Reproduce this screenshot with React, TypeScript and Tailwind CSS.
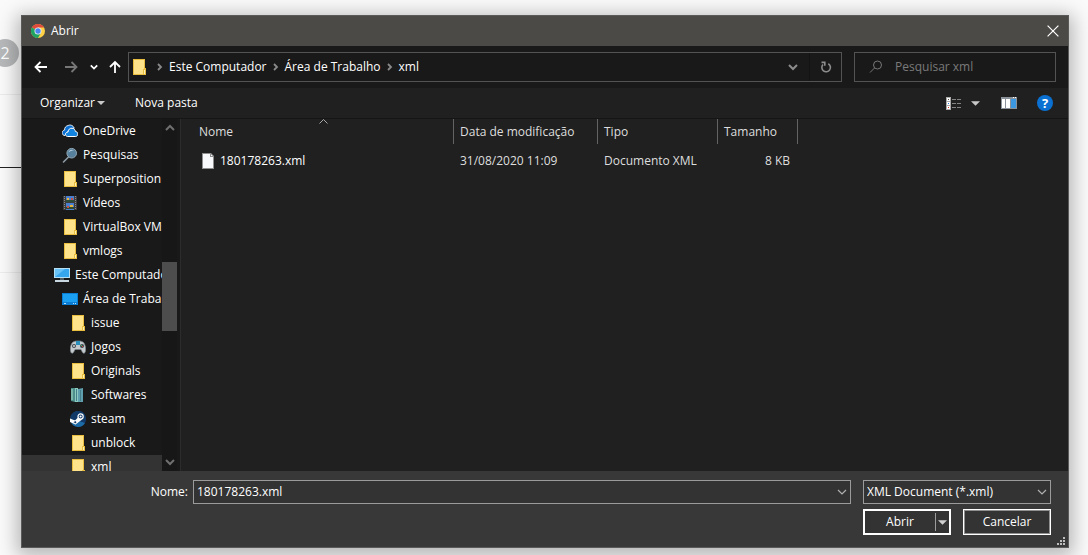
import type { ReactNode } from 'react';

function FolderIcon() {
  return (
    <svg viewBox="0 0 16 16" className="size-4 shrink-0" aria-hidden="true">
      <path d="M2 0h12v11h1v5H2z" fill="#e9bd3f" />
      <path d="M3 1h10v10h-1v4H3z" fill="#ffe38b" />
      <path d="M13 12h1v3h-1z" fill="#fff0b5" />
    </svg>
  );
}

function OneDriveIcon() {
  return (
    <svg viewBox="0 0 16 16" className="size-4 shrink-0" aria-hidden="true">
      <path d="M3 12.500C1 12.500 0 11 .2 9.500.4 8 1.500 7.200 2.600 7 2.400 4.500 4.200 2.800 6 2.600 8 1.500 11 2 12.200 5.200L8 6z" fill="#0a6fd0" stroke="#fff" strokeWidth=".9" />
      <path d="M5.500 13.500C2.500 13 3 9 6 9c.3-2.500 1.800-4 4-3.800 2 .1 3.200 1.600 3.400 3.300 3.200.2 3.200 4.700.3 5z" fill="#1284e0" stroke="#fff" strokeWidth="1" />
    </svg>
  );
}

function SearchesIcon() {
  return (
    <svg viewBox="0 0 16 16" className="size-4 shrink-0" aria-hidden="true">
      <path d="M1.500 15L7 9.500" stroke="#8d9aa5" strokeWidth="1.600" strokeLinecap="round" />
      <circle cx="9.700" cy="6.200" r="4.800" fill="#56809c" stroke="#93a7b4" />
      <path d="M6.500 5.500C7 3 10 2 12 3.500 10 3.500 8 4 6.500 5.500z" fill="#b6cedc" />
    </svg>
  );
}

function VideosIcon() {
  return (
    <svg viewBox="0 0 16 16" className="size-4 shrink-0" aria-hidden="true">
      <path d="M1 1h14v14H1z" fill="#3c3c3c" />
      <path d="M2.500 1v14M13.500 1v14" stroke="#8c8c8c" strokeDasharray="1 1" />
      <path d="M4 1h8v6H4zM4 8h8v7H4z" fill="#4a7fd0" />
      <path d="M4 5h8v2H4zM4 12h8v2H4z" fill="#2d4b35" />
      <path d="M5 3h2v2H5zM8 10h3v2H8z" fill="#e8b53c" />
      <path d="M9 3h2v2H9zM5 11h2v2H5z" fill="#c95040" />
    </svg>
  );
}

function ComputerIcon() {
  return (
    <svg viewBox="0 0 16 16" className="size-4 shrink-0" aria-hidden="true">
      <path d="M0 1h16v10H0z" fill="#b5dff5" />
      <path d="M1 2h14v8H1z" fill="#36a6ee" />
      <path d="M1 10L11 2H1z" fill="#68c2f6" />
      <path d="M6 11.500h4v1H6z" fill="#8fa4b0" />
      <path d="M1 13h14v2H1z" fill="#c8d6df" />
    </svg>
  );
}

function DesktopIcon() {
  return (
    <svg viewBox="0 0 16 16" className="size-4 shrink-0" aria-hidden="true">
      <path d="M0 2h16v12H0z" fill="#0b7ed3" />
      <path d="M1 3h14v8H1z" fill="#1b9ff3" />
      <path d="M2 12h2v1H2zM11 12h1v1h-1zM13 12h1v1h-1z" fill="#b7e4ff" />
    </svg>
  );
}

function GamesIcon() {
  return (
    <svg viewBox="0 0 16 16" className="size-4 shrink-0" aria-hidden="true">
      <path d="M3 3c2-1.500 8-1.500 10 0 2.500 2 3.500 8 2 10.500-1.500 2-3-.5-4-3H5c-1 2.500-2.500 5-4 3C-.5 11 .5 5 3 3z" fill="#c3c9cc" stroke="#7a8488" strokeWidth=".7" />
      <path d="M6 2h4v4H6z" fill="#2a8fba" />
      <circle cx="4" cy="7" r="2" fill="#3e474c" />
      <circle cx="12" cy="7" r="2" fill="#3e474c" />
      <path d="M3 7h2M4 6v2" stroke="#e5e9eb" strokeWidth=".8" />
      <path d="M11 6h1v1h-1z" fill="#52c064" />
      <path d="M12 7h1v1h-1z" fill="#e64a3c" />
    </svg>
  );
}

function SoftwaresIcon() {
  return (
    <svg viewBox="0 0 16 16" className="size-4 shrink-0" aria-hidden="true">
      <path d="M1 1l4 0v14l-4-1z" fill="#4e8f8c" />
      <path d="M5 1h3v14H5z" fill="#8ccbc0" />
      <path d="M8 2l5-1v14H8z" fill="#5f9fae" />
      <path d="M6.500 2v12M10.500 3v11" stroke="#467f8b" />
      <path d="M2 2v11" stroke="#a7dcc8" />
    </svg>
  );
}

function SteamIcon() {
  return (
    <svg viewBox="0 0 16 16" className="size-4 shrink-0" aria-hidden="true">
      <path d="M.3 6A8 8 0 1 1 .8 11z" fill="#123a68" />
      <path d="M1 11.500A8 8 0 0 0 15 12L9 10z" fill="#1c6ba6" />
      <path d="M0 7.500l5 2 4-4 3 3-4.500 3.500-2 1.500L0 11z" fill="#fff" />
      <circle cx="10.600" cy="5.500" r="2.600" fill="#123a68" stroke="#fff" strokeWidth="1.200" />
      <circle cx="10.600" cy="5.500" r="1.100" fill="#fff" />
      <circle cx="5.200" cy="11.200" r="1.500" fill="#123a68" stroke="#fff" strokeWidth=".9" />
    </svg>
  );
}

function ChromeIcon() {
  return (
    <svg viewBox="0 0 16 16" className="size-[14px] shrink-0" aria-hidden="true">
      <circle cx="8" cy="8" r="8" fill="#fdd045" />
      <path d="M8 8L1.070 4A8 8 0 0 1 14.930 4H8z" fill="#df4a3c" />
      <path d="M1.070 4A8 8 0 0 0 8 16l3.460-6L8 8z" fill="#1fa463" />
      <circle cx="8" cy="8" r="4" fill="#f4f4f4" />
      <circle cx="8" cy="8" r="3.100" fill="#4a86ee" />
    </svg>
  );
}

function Chevron({ className, path, width = 1 }: { className: string; path: string; width?: number }) {
  return (
    <svg viewBox="0 0 10 10" className={className} fill="none" stroke="currentColor" strokeWidth={width} aria-hidden="true">
      <path d={path} />
    </svg>
  );
}

const DOWN = 'M1 3l4 4 4-4';
const UP = 'M1 7l4-4 4 4';
const RIGHT = 'M3 2l3 3-3 3';

function Triangle({ className }: { className: string }) {
  return (
    <svg viewBox="0 0 8 4" className={className} fill="currentColor" aria-hidden="true">
      <path d="M0 0h8L4 4z" />
    </svg>
  );
}

type Item = { name: string; icon: ReactNode; indent: string; selected?: boolean };

const items: Item[] = [
  { name: 'OneDrive', icon: <OneDriveIcon />, indent: 'pl-10' },
  { name: 'Pesquisas', icon: <SearchesIcon />, indent: 'pl-10' },
  { name: 'Superposition', icon: <FolderIcon />, indent: 'pl-10' },
  { name: 'Vídeos', icon: <VideosIcon />, indent: 'pl-10' },
  { name: 'VirtualBox VMs', icon: <FolderIcon />, indent: 'pl-10' },
  { name: 'vmlogs', icon: <FolderIcon />, indent: 'pl-10' },
  { name: 'Este Computador', icon: <ComputerIcon />, indent: 'pl-8' },
  { name: 'Área de Trabalho', icon: <DesktopIcon />, indent: 'pl-10' },
  { name: 'issue', icon: <FolderIcon />, indent: 'pl-12' },
  { name: 'Jogos', icon: <GamesIcon />, indent: 'pl-12' },
  { name: 'Originals', icon: <FolderIcon />, indent: 'pl-12' },
  { name: 'Softwares', icon: <SoftwaresIcon />, indent: 'pl-12' },
  { name: 'steam', icon: <SteamIcon />, indent: 'pl-12' },
  { name: 'unblock', icon: <FolderIcon />, indent: 'pl-12' },
  { name: 'xml', icon: <FolderIcon />, indent: 'pl-12', selected: true },
];

function TitleBar() {
  return (
    <header className="flex h-[30px] shrink-0 items-center bg-[#4b4a47] pr-[9px] pl-[9px]">
      <ChromeIcon />
      <h1 className="ml-[6px] flex-1">Abrir</h1>
      <button type="button" aria-label="Fechar">
        <Chevron className="size-3" path="M.5.5l9 9M9.500.5l-9 9" />
      </button>
    </header>
  );
}

function Navigation() {
  const crumbs = ['Este Computador', 'Área de Trabalho', 'xml'];
  return (
    <nav className="flex h-[42px] shrink-0 items-center bg-[#191919] px-3">
      <button type="button" aria-label="Voltar">
        <svg viewBox="0 0 14 12" className="h-3 w-[14px]" fill="none" stroke="#fff" strokeWidth="1.800" aria-hidden="true">
          <path d="M13 6H2M6.500 1L1.500 6l5 5" />
        </svg>
      </button>
      <button type="button" aria-label="Avançar" className="ml-4">
        <svg viewBox="0 0 14 12" className="h-3 w-[14px]" fill="none" stroke="#777" strokeWidth="1.800" aria-hidden="true">
          <path d="M1 6h11M7.500 1l5 5-5 5" />
        </svg>
      </button>
      <button type="button" aria-label="Locais recentes" className="ml-3">
        <Chevron className="size-2" path={DOWN} width={2.2} />
      </button>
      <button type="button" aria-label="Subir um nível" className="ml-[11px]">
        <svg viewBox="0 0 12 14" className="h-[14px] w-3" fill="none" stroke="#fff" strokeWidth="1.800" aria-hidden="true">
          <path d="M6 13V2M1 7l5-5 5 5" />
        </svg>
      </button>
      <div className="ml-[7px] flex h-[30px] min-w-0 flex-1 items-center border border-[#535353]">
        <svg viewBox="0 0 14 16" className="ml-1 h-4 w-[14px]" aria-hidden="true">
          <path d="M0 0h12v9h1v7H0z" fill="#e9bd3f" />
          <path d="M1 1h10v9h-1v5H1z" fill="#ffe38b" />
          <path d="M11 11h1v4h-1z" fill="#fff0b5" />
        </svg>
        <ol className="ml-1 flex min-w-0 flex-1 items-center">
          {crumbs.map((crumb) => (
            <li key={crumb} className="flex items-center">
              <Chevron className="mx-1 size-[10px] text-[#8a8a8a]" path={RIGHT} width={1.8} />
              <button type="button" className="whitespace-nowrap">{crumb}</button>
            </li>
          ))}
        </ol>
        <button type="button" aria-label="Locais anteriores" className="mr-[11px] text-[#8c8c8c]">
          <Chevron className="size-[10px]" path={DOWN} width={2} />
        </button>
        <button type="button" aria-label="Atualizar" className="flex h-full w-8 items-center justify-center border-l border-[#131313]">
          <svg viewBox="0 0 12 12" className="size-3" fill="none" stroke="#8c8c8c" strokeWidth="1.600" aria-hidden="true">
            <path d="M8.300 2.700A4.300 4.300 0 1 1 3 3.500M1.500 1.400h3.300v3.300" />
          </svg>
        </button>
      </div>
      <label className="ml-3 flex h-[30px] w-[202px] items-center border border-[#535353] pl-[14px]">
        <svg viewBox="0 0 14 14" className="size-[14px] shrink-0" fill="none" stroke="#777" aria-hidden="true">
          <circle cx="8.500" cy="5" r="4" />
          <path d="M5.500 8L1 12.500" />
        </svg>
        <input type="search" aria-label="Pesquisar xml" placeholder="Pesquisar xml" className="ml-3 min-w-0 flex-1 bg-transparent outline-none placeholder:text-[#7a7a7a]" />
      </label>
    </nav>
  );
}

function Toolbar() {
  return (
    <div className="flex h-[31px] shrink-0 items-center border-b border-[#151515] bg-[#202020] pr-[15px] pl-[18px]">
      <button type="button" className="flex items-center">
        Organizar
        <Triangle className="ml-[2px] h-1 w-2 text-[#c8c8c8]" />
      </button>
      <button type="button" className="ml-[30px]">Nova pasta</button>
      <button type="button" aria-label="Alterar modo de exibição" className="ml-auto flex items-center">
        <svg viewBox="0 0 17 13" className="h-[13px] w-[17px]" aria-hidden="true">
          <path d="M0 0h5v13H0z" fill="#aaa" />
          <path d="M1 1h3v3H1zM1 5h3v3H1zM1 9h3v3H1z" fill="#fff" />
          <path d="M2 2h1v1H2z" fill="#555" />
          <path d="M2 6h1v1H2z" fill="#2878e0" />
          <path d="M2 10h1v1H2z" fill="#e02828" />
          <path d="M6 2.500h10M6 6.500h10M6 10.500h10" stroke="#858585" strokeDasharray="4 1" />
        </svg>
        <Triangle className="ml-2 h-[5px] w-[9px] text-[#c8c8c8]" />
      </button>
      <button type="button" aria-label="Mostrar o painel de visualização" className="ml-[21px]">
        <svg viewBox="0 0 16 12" className="h-3 w-4" aria-hidden="true">
          <path d="M0 0h16v12H0z" fill="#8b9299" />
          <path d="M1 2h3v9H1zM5 2h4v9H5z" fill="#fff" />
          <path d="M10 2h5v9h-5z" fill="#3c98e0" />
          <path d="M12 0h1v1h-1zM14 0h1v1h-1z" fill="#fff" />
        </svg>
      </button>
      <button type="button" aria-label="Ajuda" className="ml-5">
        <span className="flex size-4 items-center justify-center rounded-full bg-[#0a70d2] text-[13px] leading-4 font-bold">?</span>
      </button>
    </div>
  );
}

function Sidebar() {
  return (
    <aside className="flex w-[159px] shrink-0 border-r border-[#2c2c2c] bg-[#191919]">
      <ul className="min-w-0 flex-1 overflow-hidden">
        {items.map((item) => (
          <li key={item.name}>
            <a href="#" className={`flex h-6 items-center gap-[5px] whitespace-nowrap ${item.indent} ${item.selected ? 'bg-[#333333]' : ''}`}>
              {item.icon}
              {item.name}
            </a>
          </li>
        ))}
      </ul>
      <div className="mr-[3px] flex w-[15px] shrink-0 flex-col items-center bg-[#171717] py-1 text-[#6f6f6f]">
        <Chevron className="size-[10px]" path={UP} width={2} />
        <div className="flex w-full flex-1 flex-col">
          <div className="flex-[129]" />
          <div className="flex-[69] bg-[#4d4d4d]" />
          <div className="flex-[126]" />
        </div>
        <Chevron className="size-[10px]" path={DOWN} width={2} />
      </div>
    </aside>
  );
}

function FileList() {
  return (
    <section className="min-w-0 flex-1 bg-[#202020]">
      <table className="w-[617px] table-fixed border-separate border-spacing-0 text-left text-[#dedede]">
        <colgroup>
          <col className="w-[273px]" />
          <col className="w-36" />
          <col className="w-[120px]" />
          <col className="w-20" />
        </colgroup>
        <thead>
          <tr className="h-[25px]">
            <th className="relative border-r border-[#636363] p-0 pl-[18px] font-normal">
              Nome
              <svg viewBox="0 0 9 5" className="absolute top-0 left-[138px] h-[5px] w-[9px]" fill="none" stroke="#a8a8a8" aria-hidden="true">
                <path d="M.5 4.500l4-4 4 4" />
              </svg>
            </th>
            <th className="border-r border-[#636363] p-0 pl-[6px] font-normal">Data de modificação</th>
            <th className="border-r border-[#636363] p-0 pl-[6px] font-normal">Tipo</th>
            <th className="border-r border-[#636363] p-0 pl-[6px] font-normal">Tamanho</th>
          </tr>
        </thead>
        <tbody>
          <tr className="h-[34px]">
            <td className="p-0 pl-[21px] text-white">
              <span className="flex items-center gap-[6px]">
                <svg viewBox="0 0 12 16" className="h-4 w-3" aria-hidden="true">
                  <path d="M0 0h9l3 3v13H0z" fill="#8e8e8e" />
                  <path d="M1 1h7v3h3v11H1z" fill="#f8f9fa" />
                  <path d="M9 1.500L10.700 3H9z" fill="#fff" />
                </svg>
                180178263.xml
              </span>
            </td>
            <td className="p-0 pl-[6px]">31/08/2020 11:09</td>
            <td className="p-0 pl-[6px]">Documento XML</td>
            <td className="p-0 pr-2 text-right">8 KB</td>
          </tr>
        </tbody>
      </table>
    </section>
  );
}

function Footer() {
  return (
    <footer className="flex h-[76px] shrink-0 flex-col gap-[5px] bg-[#383838] pt-[9px] pr-[17px]">
      <div className="flex items-start gap-3">
        <div className="flex min-w-0 flex-1 items-center">
          <label htmlFor="filename" className="w-[166px] shrink-0 text-right">Nome:</label>
          <div className="ml-[5px] flex h-6 min-w-0 flex-1 items-center border border-[#9b9b9b] bg-[#333333]">
            <input id="filename" type="text" defaultValue="180178263.xml" className="min-w-0 flex-1 bg-transparent px-[3px] outline-none" />
            <button type="button" aria-label="Mostrar nomes anteriores" className="mr-[3px] text-[#b0b0b0]">
              <Chevron className="size-[10px]" path={DOWN} width={1.2} />
            </button>
          </div>
        </div>
        <div className="relative w-[188px] shrink-0">
          <select aria-label="Tipo de arquivo" className="block h-6 w-full appearance-none border border-[#9b9b9b] bg-[#333333] pl-[3px] outline-none">
            <option>XML Document (*.xml)</option>
          </select>
          <Chevron className="pointer-events-none absolute top-[7px] right-1 size-[10px] text-[#b0b0b0]" path={DOWN} width={1.2} />
        </div>
      </div>
      <div className="flex justify-end gap-3">
        <div className="flex h-[26px] w-[88px] items-center border-2 border-white bg-[#333333]">
          <button type="button" className="h-full flex-1">Abrir</button>
          <button type="button" aria-label="Mais opções de abertura" className="flex h-[18px] w-[14px] items-center justify-end border-l border-[#9b9b9b] pr-[2px]">
            <Triangle className="h-[5px] w-[9px] text-[#d0d0d0]" />
          </button>
        </div>
        <button type="button" className="h-[26px] w-[88px] border border-white bg-[#333333] ring-1 ring-[#8f8f8f] ring-inset">Cancelar</button>
      </div>
    </footer>
  );
}

export default function App() {
  return (
    <div className="relative flex h-screen overflow-hidden bg-[#fafafa] pt-[15px] pr-[19px] pb-[7px] pl-[21px] font-['Open_Sans',sans-serif] text-xs leading-4 text-white">
      <div className="absolute top-[94px] left-0 h-px w-8 bg-[#ececec]" />
      <div className="absolute top-[167px] left-0 h-px w-8 bg-[#222]" />
      <div className="absolute top-[272px] left-0 h-px w-8 bg-[#ececec]" />
      <span className="absolute top-[39px] -left-[9px] flex size-7 items-center justify-center rounded-full bg-[#b6b8b9] text-base">2</span>
      <main className="relative flex min-w-0 flex-1 flex-col border border-[#5a5a58] shadow-[0_4px_18px_4px_rgba(0,0,0,0.28)]">
        <TitleBar />
        <Navigation />
        <Toolbar />
        <div className="flex min-h-0 flex-1 overflow-hidden">
          <Sidebar />
          <FileList />
        </div>
        <Footer />
        <svg viewBox="0 0 8 8" className="absolute right-[3px] bottom-[2px] size-2" fill="#bdbdbd" aria-hidden="true">
          <path d="M6 0h2v2H6zM3 3h2v2H3zM6 3h2v2H6zM0 6h2v2H0zM3 6h2v2H3zM6 6h2v2H6z" />
        </svg>
      </main>
    </div>
  );
}
